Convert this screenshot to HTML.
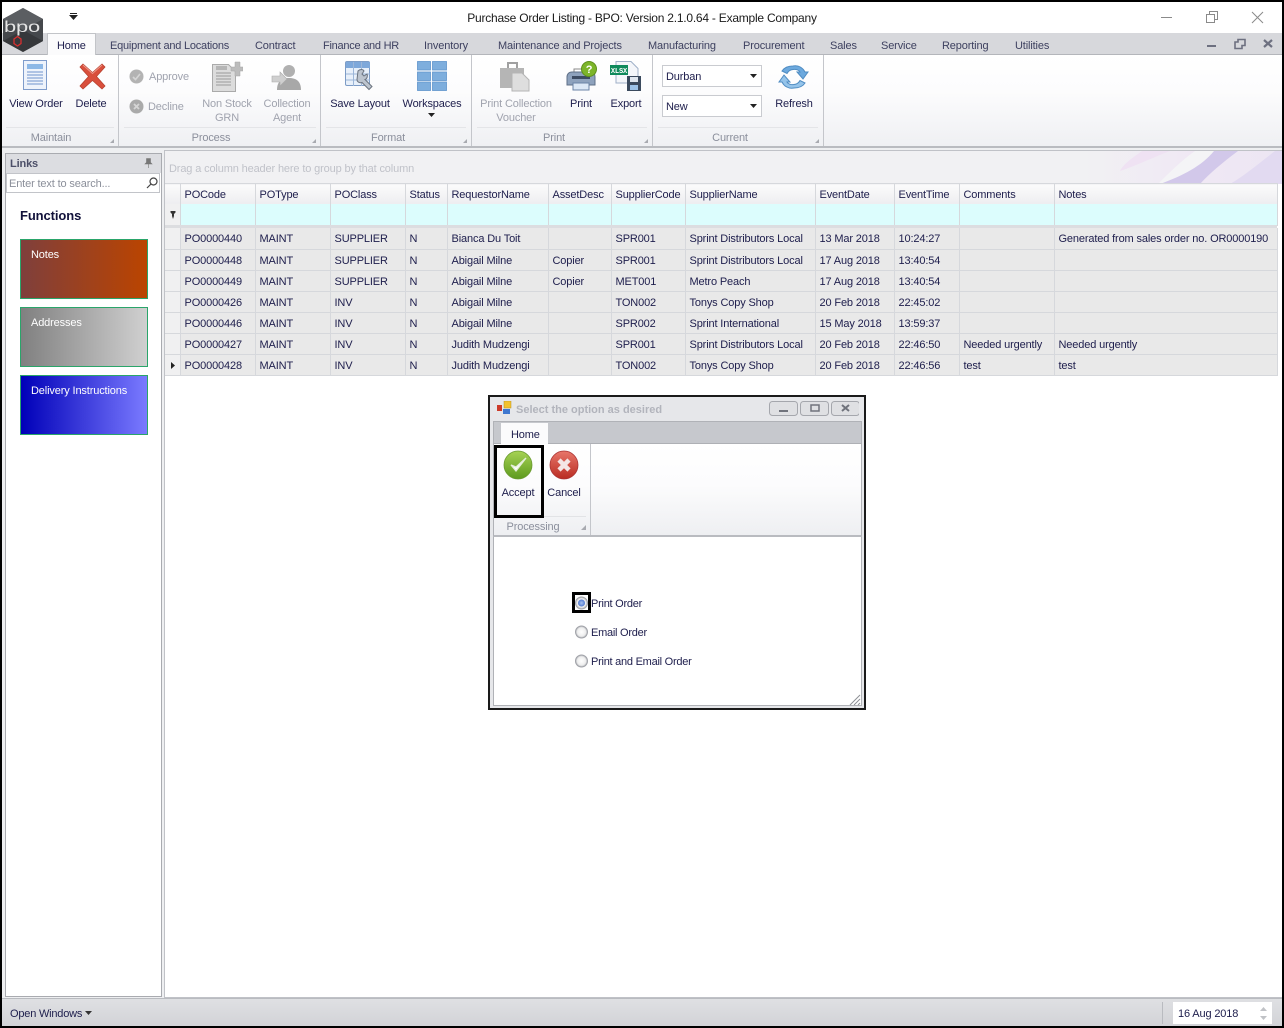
<!DOCTYPE html>
<html><head><meta charset="utf-8"><title>Purchase Order Listing</title>
<style>
*{box-sizing:border-box}
html,body{margin:0;padding:0}
body{width:1284px;height:1028px;position:relative;overflow:hidden;background:#fff;font-family:"Liberation Sans",sans-serif;font-size:11px;letter-spacing:-.14px;color:#20204e}
.a{position:absolute}
.t{position:absolute;white-space:nowrap;line-height:14px;font-size:11px;margin-top:1px}
.c{text-align:center;transform:translateX(-50%)}
.g{color:#a0a3ae}
.h{color:#8b8f9c}
.tab{color:#3e4160}
table{border-collapse:collapse;table-layout:fixed;position:absolute;left:165px;font-size:11px}
td{height:21px;padding:2px 0 0 4px;border-right:1px solid #d6d8dc;border-bottom:1px solid #d6d8dc;white-space:nowrap;overflow:visible;color:#20204e;line-height:14px}
#rows td{background:#e9e9e9}
#rows td:first-child{background:#f0f0f1}
#head td{background:linear-gradient(#fbfbfb,#ededf0)}
#filt td{background:#dcfdfd}
.sep{background:#c4c6cb}
.fn{position:absolute;left:20px;width:128px;height:60px;border:1px solid #2aa56a;color:#fff;padding:8px 0 0 10px;line-height:14px}
</style></head><body>

<!-- top title -->
<div class="t" style="left:0;width:1284px;top:10px;text-align:center;font-size:12px;letter-spacing:-.23px;color:#1a1a1a">Purchase Order Listing - BPO: Version 2.1.0.64 - Example Company</div>
<svg class="a" style="left:69px;top:13px" width="9" height="8"><rect x="1" y="0" width="7" height="1" fill="#222"/><path d="M0 2h9L4.500 7z" fill="#222"/></svg>
<svg class="a" style="left:1150px;top:6px" width="125" height="22" fill="none" stroke="#8a8a8a"><path d="M11 11.500h11"/><path d="M56.500 8.500h8v8h-8zM59.500 8.500v-3h8v8h-3"/><path d="M102 6l11 11M113 6l-11 11"/></svg>

<!-- tabs bar -->
<div class="a" style="left:2px;top:33px;width:1280px;height:22px;background:#d7d8dc;border-bottom:1px solid #b4b6bb"></div>
<div class="a" style="left:47px;top:33px;width:49px;height:22px;background:#fbfbfc;border:1px solid #c2c4c8;border-bottom:none"></div>
<div class="t" style="left:57px;top:38px;color:#20204e">Home</div>
<div class="t tab" style="left:110px;top:38px;letter-spacing:-.22px">Equipment and Locations</div>
<div class="t tab" style="left:255px;top:38px">Contract</div>
<div class="t tab" style="left:323px;top:38px;letter-spacing:-.25px">Finance and HR</div>
<div class="t tab" style="left:424px;top:38px">Inventory</div>
<div class="t tab" style="left:498px;top:38px">Maintenance and Projects</div>
<div class="t tab" style="left:648px;top:38px">Manufacturing</div>
<div class="t tab" style="left:743px;top:38px">Procurement</div>
<div class="t tab" style="left:830px;top:38px">Sales</div>
<div class="t tab" style="left:881px;top:38px">Service</div>
<div class="t tab" style="left:942px;top:38px">Reporting</div>
<div class="t tab" style="left:1015px;top:38px">Utilities</div>
<svg class="a" style="left:1204px;top:38px" width="72" height="12"><rect x="3" y="7" width="9" height="2" fill="#6d7080"/><path d="M31 4h3V1.500h7v6h-3v3h-7z" fill="none" stroke="#6d7080" stroke-width="1.600"/><path d="M60 2l8 7M68 2l-8 7" stroke="#6d7080" stroke-width="2.200"/></svg>

<!-- logo -->
<svg class="a" style="left:2px;top:8px" width="42" height="46"><path d="M21 0L41 11V33L21 44L1 33V11Z" fill="#45484c"/><path d="M21 0L41 11L21 22L1 11Z" fill="#5b5e62"/><path d="M1 33L21 22L41 33L21 44Z" fill="#36383b"/><text x="2" y="24" font-family="Liberation Sans" font-size="16" fill="#e4e4e4" textLength="36" lengthAdjust="spacingAndGlyphs">bpo</text><path d="M12 31l3.500-2.500 3.500 2.500v4.500l-3.500 2.500-3.500-2.500z" fill="none" stroke="#d83030" stroke-width="1.300"/></svg>

<!-- ribbon -->
<div class="a" style="left:2px;top:55px;width:1280px;height:93px;background:linear-gradient(#fff 0%,#fcfcfd 40%,#eff0f3 100%);border-bottom:2px solid #b9bbc0"></div>
<div class="a sep" style="left:118px;top:55px;width:1px;height:91px"></div>
<div class="a sep" style="left:320px;top:55px;width:1px;height:91px"></div>
<div class="a sep" style="left:471px;top:55px;width:1px;height:91px"></div>
<div class="a sep" style="left:652px;top:55px;width:1px;height:91px"></div>
<div class="a sep" style="left:823px;top:55px;width:1px;height:91px"></div>
<div class="a" style="left:6px;top:127px;width:108px;height:1px;background:#e4e5e8"></div>
<div class="a" style="left:124px;top:127px;width:192px;height:1px;background:#e4e5e8"></div>
<div class="a" style="left:326px;top:127px;width:140px;height:1px;background:#e4e5e8"></div>
<div class="a" style="left:477px;top:127px;width:170px;height:1px;background:#e4e5e8"></div>
<div class="a" style="left:658px;top:127px;width:160px;height:1px;background:#e4e5e8"></div>

<!-- view order icon -->
<svg class="a" style="left:23px;top:60px" width="26" height="31"><rect x=".5" y=".5" width="23" height="29" fill="#eef3fb" stroke="#7f9ccb"/><rect x="4" y="4" width="16" height="5" fill="#8db8e6"/><g stroke="#6f93cc"><path d="M4 12h16M4 15h16M4 18h16M4 21h16M4 24h16"/></g></svg>
<div class="t c" style="left:36px;top:96px">View Order</div>
<!-- delete -->
<svg class="a" style="left:79px;top:63px" width="27" height="27"><path d="M4 1L13.500 9.500 23 1l3 3-8.500 9.500L26 23l-3 3-9.500-8.500L4 26l-3-3 8.500-9.500L1 4z" fill="#d94f3c" stroke="#b8412f" stroke-width=".8"/><path d="M4 2L13.500 10.500 23 2" fill="none" stroke="#ee9a8c"/></svg>
<div class="t c" style="left:91px;top:96px">Delete</div>
<div class="t c h" style="left:51px;top:130px">Maintain</div>

<!-- process -->
<svg class="a" style="left:129px;top:69px" width="15" height="15"><circle cx="7.500" cy="7.500" r="7" fill="#b3b3b3"/><path d="M4 8l2.500 2.500L11 5" stroke="#d5d5d5" stroke-width="1.600" fill="none"/></svg>
<div class="t g" style="left:149px;top:69px">Approve</div>
<svg class="a" style="left:129px;top:99px" width="15" height="15"><circle cx="7.500" cy="7.500" r="7" fill="#aaa"/><path d="M5 5l5 5M10 5l-5 5" stroke="#d5d5d5" stroke-width="1.800"/></svg>
<div class="t g" style="left:148px;top:99px">Decline</div>
<svg class="a" style="left:212px;top:61px" width="31" height="31"><path d="M.5 3.500h16l7 7v20H.5z" fill="#dcdcdc" stroke="#aaa"/><g stroke="#9a9a9a"><path d="M4 12h15M4 15h15M4 18h15M4 21h15M4 24h15"/></g><rect x="4" y="5" width="11" height="4" fill="#b5b5b5"/><path d="M19 6h4V1h5v5h3v4h-3v5h-5v-5h-4z" fill="#bcbcbc" stroke="#a5a5a5" stroke-width=".5"/></svg>
<div class="t c g" style="left:227px;top:96px;text-align:center">Non Stock<br>GRN</div>
<svg class="a" style="left:271px;top:64px" width="31" height="26"><circle cx="18" cy="7" r="6" fill="#b0b0b0"/><path d="M6 26c0-9 5-12 12-12s12 3 12 12z" fill="#a8a8a8"/><path d="M1 12h8V8l7 7-7 7v-4H1z" fill="#cfcfcf" stroke="#aaa" stroke-width=".6"/></svg>
<div class="t c g" style="left:287px;top:96px;text-align:center">Collection<br>Agent</div>
<div class="t c h" style="left:211px;top:130px">Process</div>

<!-- format -->
<svg class="a" style="left:345px;top:61px" width="30" height="31"><rect x=".5" y=".5" width="24" height="24" rx="1.500" fill="#e8f0fa" stroke="#7d9cc6"/><rect x="1" y="1" width="24" height="6" fill="#7ea8da"/><g stroke="#9cb6d8"><path d="M1 13h24M1 19h24M8.500 1v24M16.500 1v24"/></g><path d="M13 10c2-2 5-2 6 0l-2 3 2 2 3-2c1 2 0 5-2 5.500l7 7-3 3-7-7c-3 1-5-1-5-3z" fill="#bcc4ce" stroke="#6c7480" stroke-width="1"/></svg>
<div class="t c" style="left:360px;top:96px">Save Layout</div>
<svg class="a" style="left:417px;top:61px" width="30" height="30"><g fill="#7eaedd" stroke="#5f94cc" stroke-width=".8"><rect x=".5" y=".5" width="13" height="8.500"/><rect x="15.500" y=".5" width="14" height="8.500"/><rect x=".5" y="11" width="13" height="8.500"/><rect x="15.500" y="11" width="14" height="8.500"/><rect x=".5" y="21" width="13" height="8.500"/><rect x="15.500" y="21" width="14" height="8.500"/></g></svg>
<div class="t c" style="left:432px;top:96px">Workspaces</div>
<svg class="a" style="left:428px;top:113px" width="7" height="5"><path d="M0 0h7L3.500 4z" fill="#222"/></svg>
<div class="t c h" style="left:388px;top:130px">Format</div>

<!-- print -->
<svg class="a" style="left:499px;top:60px" width="32" height="32"><path d="M1 8h24v20H1z" fill="#b5b5b5"/><path d="M9 8V3h9v5" fill="none" stroke="#a0a0a0" stroke-width="2"/><path d="M13 13h10l7 7v11H13z" fill="#dedede" stroke="#b5b5b5"/></svg>
<div class="t c g" style="left:516px;top:96px;text-align:center">Print Collection<br>Voucher</div>
<svg class="a" style="left:565px;top:61px" width="32" height="30"><path d="M9 8h15v8H9z" fill="#fff" stroke="#888"/><path d="M2 16c0-3 2-5 5-5h19c3 0 4 2 4 5v8H2z" fill="#8ea2bd" stroke="#5f7088"/><rect x="7" y="15" width="18" height="3" fill="#3d4c63"/><rect x="8" y="22" width="16" height="7" fill="#dce8f6" stroke="#6b84a6"/><circle cx="24" cy="8" r="7.500" fill="#7db52a" stroke="#5e8f1c"/><text x="24" y="12" text-anchor="middle" font-family="Liberation Sans" font-weight="bold" font-size="11" fill="#fff">?</text></svg>
<div class="t c" style="left:581px;top:96px">Print</div>
<svg class="a" style="left:610px;top:61px" width="32" height="30"><path d="M6 .5h15l7 7V22H6z" fill="#f4f6fa" stroke="#9fb0c8"/><rect x="0" y="4" width="18" height="10" fill="#0f8a5c"/><text x="9" y="12" text-anchor="middle" font-family="Liberation Mono" font-weight="bold" font-size="7" fill="#fff">XLSX</text><rect x="17" y="15" width="14" height="15" fill="#3b4a5e"/><rect x="20" y="16" width="8" height="5" fill="#dfe6ef"/><rect x="20" y="24" width="8" height="5" fill="#9cc2e8"/></svg>
<div class="t c" style="left:626px;top:96px">Export</div>
<div class="t c h" style="left:554px;top:130px">Print</div>

<!-- current -->
<div class="a" style="left:662px;top:65px;width:100px;height:22px;background:#fff;border:1px solid #c9cbd0"></div>
<div class="t" style="left:666px;top:69px">Durban</div>
<svg class="a" style="left:750px;top:74px" width="7" height="5"><path d="M0 0h7L3.500 4z" fill="#222"/></svg>
<div class="a" style="left:662px;top:95px;width:100px;height:22px;background:#fff;border:1px solid #c9cbd0"></div>
<div class="t" style="left:666px;top:99px">New</div>
<svg class="a" style="left:750px;top:104px" width="7" height="5"><path d="M0 0h7L3.500 4z" fill="#222"/></svg>
<svg class="a" style="left:777px;top:62px" width="33" height="30"><path d="M16 4c6-1 10 2 12 6h3l-5 7-6-7h3c-1-2-4-3-7-2.500-3 .3-5 2-6 4L5 9c2-3 6-5 11-5z" fill="#6ca9de" stroke="#4f8cc2"/><path d="M17 26c-6 1-10-2-12-6H2l5-7 6 7h-3c1 2 4 3 7 2.500 3-.3 5-2 6-4l5 2.500c-2 3-6 5-11 5z" fill="#95c4ea" stroke="#4f8cc2"/></svg>
<div class="t c" style="left:794px;top:96px">Refresh</div>
<div class="t c h" style="left:730px;top:130px">Current</div>

<!-- launcher corners -->
<svg class="a" style="left:0;top:131px" width="830" height="14" fill="#a8aab0"><path d="M114 8v4h-4zM316 8v4h-4zM467 8v4h-4zM648 8v4h-4zM819 8v4h-4z"/></svg>

<!-- main bg -->
<div class="a" style="left:2px;top:148px;width:1280px;height:850px;background:#eeeff1"></div>

<!-- links panel -->
<div class="a" style="left:5px;top:153px;width:157px;height:844px;background:#fff;border:1px solid #a9abb0"></div>
<div class="a" style="left:6px;top:154px;width:155px;height:19px;background:#dcdde1"></div>
<div class="t" style="left:10px;top:156px;font-weight:bold;color:#4c4f68">Links</div>
<svg class="a" style="left:144px;top:158px" width="9" height="10"><path d="M2.500 .5h4v4l1.500 1.500H1l1.500-1.500zM4.500 6v4" fill="#777" stroke="#777" stroke-width=".6"/></svg>
<div class="a" style="left:6px;top:173px;width:154px;height:20px;background:#fff;border:1px solid #c2c4c9"></div>
<div class="t" style="left:9px;top:176px;color:#8b8f9a">Enter text to search...</div>
<svg class="a" style="left:146px;top:177px" width="12" height="12" fill="none" stroke="#444" stroke-width="1.200"><circle cx="7.500" cy="4.500" r="3.500"/><path d="M5 7l-4 4"/></svg>
<div class="t" style="left:20px;top:208px;font-size:13px;font-weight:bold;letter-spacing:-.1px;color:#11113a">Functions</div>
<div class="fn" style="top:239px;background:linear-gradient(90deg,#7f3f3c,#bb4400)">Notes</div>
<div class="fn" style="top:307px;background:linear-gradient(90deg,#808080,#d0d0d0)">Addresses</div>
<div class="fn" style="top:375px;background:linear-gradient(90deg,#0000b8,#7a7aff)">Delivery Instructions</div>

<!-- grid panel -->
<div class="a" style="left:164px;top:150px;width:1118px;height:848px;background:#fff;border:1px solid #c0c2c7;border-right:none"></div>
<div class="a" style="left:165px;top:151px;width:1117px;height:33px;background:#f1f1f3;overflow:hidden">
<svg width="1117" height="33" style="position:absolute;left:0;top:0"><defs><linearGradient id="f" x1="0" x2="1" y1="0" y2="0"><stop offset="0" stop-color="#f1f1f3"/><stop offset=".55" stop-color="#f0e8f4"/><stop offset="1" stop-color="#ece6f3"/></linearGradient></defs><rect x="920" y="0" width="197" height="33" fill="url(#f)"/><path d="M1030 0h35c-18 10-32 22-44 33h-28c12-12 24-24 37-33z" fill="#f4f4f6"/><path d="M995 33c22-8 42-18 54-33h24c-16 12-28 22-38 33z" fill="#d2c8ea"/><path d="M1065 33c14-8 28-20 45-33h7v33z" fill="#e2daf1"/><path d="M955 20c18-6 34-14 50-20h-28c-8 6-18 12-22 20z" fill="#efe2f3"/></svg>
</div>
<div class="t" style="left:169px;top:161px;color:#c0c2c9">Drag a column header here to group by that column</div>

<table id="head" style="top:183px;width:1112px;border-top:1px solid #d6d8dc"><colgroup><col style="width:15px"><col style="width:75px"><col style="width:75px"><col style="width:75px"><col style="width:42px"><col style="width:101px"><col style="width:63px"><col style="width:74px"><col style="width:130px"><col style="width:79px"><col style="width:65px"><col style="width:95px"><col style="width:223px"></colgroup>
<tr><td></td><td>POCode</td><td>POType</td><td>POClass</td><td>Status</td><td>RequestorName</td><td>AssetDesc</td><td>SupplierCode</td><td>SupplierName</td><td>EventDate</td><td>EventTime</td><td>Comments</td><td>Notes</td></tr></table>
<table id="filt" style="top:204px;width:1112px"><colgroup><col style="width:15px"><col style="width:75px"><col style="width:75px"><col style="width:75px"><col style="width:42px"><col style="width:101px"><col style="width:63px"><col style="width:74px"><col style="width:130px"><col style="width:79px"><col style="width:65px"><col style="width:95px"><col style="width:223px"></colgroup>
<tr><td style="background:#f0f0f1"></td><td></td><td></td><td></td><td></td><td></td><td></td><td></td><td></td><td></td><td></td><td></td><td></td></tr></table>
<svg class="a" style="left:170px;top:211px" width="6" height="8"><path d="M.5 0h5v1.500L4 3v2L3 8 2 5V3L.5 1.500z" fill="#333"/></svg>
<div class="a" style="left:165px;top:225px;width:1112px;height:3px;background:#dcdde0"></div>

<table id="rows" style="top:228px;width:1112px"><colgroup><col style="width:15px"><col style="width:75px"><col style="width:75px"><col style="width:75px"><col style="width:42px"><col style="width:101px"><col style="width:63px"><col style="width:74px"><col style="width:130px"><col style="width:79px"><col style="width:65px"><col style="width:95px"><col style="width:223px"></colgroup>
<tr><td></td><td>PO0000440</td><td>MAINT</td><td>SUPPLIER</td><td>N</td><td>Bianca Du Toit</td><td></td><td>SPR001</td><td>Sprint Distributors Local</td><td>13 Mar 2018</td><td>10:24:27</td><td></td><td>Generated from sales order no. OR0000190</td></tr>
<tr><td></td><td>PO0000448</td><td>MAINT</td><td>SUPPLIER</td><td>N</td><td>Abigail Milne</td><td>Copier</td><td>SPR001</td><td>Sprint Distributors Local</td><td>17 Aug 2018</td><td>13:40:54</td><td></td><td></td></tr>
<tr><td></td><td>PO0000449</td><td>MAINT</td><td>SUPPLIER</td><td>N</td><td>Abigail Milne</td><td>Copier</td><td>MET001</td><td>Metro Peach</td><td>17 Aug 2018</td><td>13:40:54</td><td></td><td></td></tr>
<tr><td></td><td>PO0000426</td><td>MAINT</td><td>INV</td><td>N</td><td>Abigail Milne</td><td></td><td>TON002</td><td>Tonys Copy Shop</td><td>20 Feb 2018</td><td>22:45:02</td><td></td><td></td></tr>
<tr><td></td><td>PO0000446</td><td>MAINT</td><td>INV</td><td>N</td><td>Abigail Milne</td><td></td><td>SPR002</td><td>Sprint International</td><td>15 May 2018</td><td>13:59:37</td><td></td><td></td></tr>
<tr><td></td><td>PO0000427</td><td>MAINT</td><td>INV</td><td>N</td><td>Judith Mudzengi</td><td></td><td>SPR001</td><td>Sprint Distributors Local</td><td>20 Feb 2018</td><td>22:46:50</td><td>Needed urgently</td><td>Needed urgently</td></tr>
<tr><td></td><td>PO0000428</td><td>MAINT</td><td>INV</td><td>N</td><td>Judith Mudzengi</td><td></td><td>TON002</td><td>Tonys Copy Shop</td><td>20 Feb 2018</td><td>22:46:56</td><td>test</td><td>test</td></tr>
</table>
<svg class="a" style="left:171px;top:362px" width="5" height="7"><path d="M0 0l4 3.500L0 7z" fill="#222"/></svg>

<!-- dialog -->
<div class="a" style="left:488px;top:395px;width:378px;height:315px;background:#e6e7ea;border:2px solid #1a1a1a"></div>
<svg class="a" style="left:497px;top:401px" width="15" height="14"><rect x="7" y="0" width="7" height="7" fill="#f2c230" stroke="#b89020" stroke-width=".5"/><rect x="0" y="4" width="5" height="6" fill="#cc3a2a"/><rect x="6" y="8" width="7" height="5" fill="#3f78d0"/></svg>
<div class="t" style="left:516px;top:402px;font-weight:bold;letter-spacing:0;color:#b2b4bc">Select the option as desired</div>
<svg class="a" style="left:769px;top:401px" width="90" height="15"><g fill="#dfe0e3" stroke="#a5a7ad"><rect x=".5" y=".5" width="28" height="14" rx="3"/><rect x="31.500" y=".5" width="28" height="14" rx="3"/><rect x="62.500" y=".5" width="28" height="14" rx="3"/></g><rect x="10" y="9" width="9" height="2" fill="#70737c"/><rect x="42" y="4" width="8" height="6" fill="none" stroke="#70737c" stroke-width="1.500"/><path d="M73 4l7 6M80 4l-7 6" stroke="#70737c" stroke-width="2"/></svg>
<div class="a" style="left:493px;top:421px;width:369px;height:23px;background:#c6c8cd;border:1px solid #b0b2b7;border-bottom:1px solid #aeb0b5"></div>
<div class="a" style="left:501px;top:423px;width:47px;height:21px;background:#fbfbfc"></div>
<div class="t" style="left:511px;top:427px">Home</div>
<div class="a" style="left:493px;top:444px;width:369px;height:93px;background:linear-gradient(#fff 0%,#fcfcfd 45%,#eeeff2 100%);border-left:1px solid #b0b2b7;border-right:1px solid #b0b2b7;border-bottom:2px solid #b9bbc0"></div>
<div class="a sep" style="left:590px;top:444px;width:1px;height:91px"></div>
<div class="a" style="left:496px;top:516px;width:90px;height:1px;background:#e2e3e6"></div>
<svg class="a" style="left:503px;top:450px" width="30" height="30"><defs><linearGradient id="gr" x1="0" y1="0" x2="0" y2="1"><stop offset="0" stop-color="#a6d254"/><stop offset="1" stop-color="#5d9a1e"/></linearGradient><linearGradient id="rd" x1="0" y1="0" x2="0" y2="1"><stop offset="0" stop-color="#e8766a"/><stop offset="1" stop-color="#b92c22"/></linearGradient></defs><circle cx="15" cy="15" r="14" fill="url(#gr)" stroke="#6a9a30" stroke-width=".8"/><path d="M8 15l5 6L23 8l-10 9z" fill="#fff" stroke="#e4eed8" stroke-width="1.300"/></svg>
<svg class="a" style="left:549px;top:450px" width="30" height="30"><circle cx="15" cy="15" r="14" fill="url(#rd)" stroke="#a33" stroke-width=".8"/><path d="M10 10l10 10M20 10L10 20" stroke="#f4e6e6" stroke-width="4.500"/></svg>
<div class="t c" style="left:518px;top:485px">Accept</div>
<div class="t c" style="left:564px;top:485px">Cancel</div>
<div class="t c h" style="left:533px;top:519px">Processing</div>
<svg class="a" style="left:580px;top:524px" width="7" height="7"><path d="M6 1v5H1z" fill="#a8aab0"/></svg>
<div class="a" style="left:494px;top:445px;width:50px;height:73px;border:3px solid #000"></div>
<div class="a" style="left:493px;top:537px;width:369px;height:169px;background:#fff;border:1px solid #b0b2b7;border-top:none"></div>
<div class="a" style="left:572px;top:592px;width:19px;height:21px;border:3px solid #000"></div>
<svg class="a" style="left:574px;top:595px" width="16" height="75"><defs><radialGradient id="rb"><stop offset="0" stop-color="#fff"/><stop offset=".7" stop-color="#eee"/><stop offset="1" stop-color="#aeb0b6"/></radialGradient><radialGradient id="rs"><stop offset="0" stop-color="#a9c2f0"/><stop offset="1" stop-color="#4f78d0"/></radialGradient></defs><circle cx="7.500" cy="8" r="6" fill="url(#rb)" stroke="#a0a2a8"/><circle cx="7.500" cy="8" r="3.500" fill="url(#rs)"/><circle cx="7.500" cy="37" r="6" fill="url(#rb)" stroke="#a0a2a8"/><circle cx="7.500" cy="66" r="6" fill="url(#rb)" stroke="#a0a2a8"/></svg>
<div class="t" style="left:591px;top:596px;letter-spacing:-.25px">Print Order</div>
<div class="t" style="left:591px;top:625px;letter-spacing:-.25px">Email Order</div>
<div class="t" style="left:591px;top:654px;letter-spacing:-.25px">Print and Email Order</div>
<svg class="a" style="left:849px;top:694px" width="12" height="12" stroke="#8e9096"><path d="M1 11L11 1M5 11l6-6M9 11l2-2"/></svg>

<!-- status bar -->
<div class="a" style="left:2px;top:998px;width:1280px;height:28px;background:linear-gradient(#dfe0e3,#d2d3d7);border-top:1px solid #b9bbc0"></div>
<div class="t" style="left:10px;top:1006px;letter-spacing:-.2px">Open Windows</div>
<svg class="a" style="left:85px;top:1011px" width="7" height="5"><path d="M0 0h7L3.500 4z" fill="#333"/></svg>
<div class="a" style="left:1162px;top:1002px;width:1px;height:22px;background:#b9bbc0"></div>
<div class="a" style="left:1173px;top:1002px;width:99px;height:22px;background:#fff"></div>
<div class="t" style="left:1178px;top:1006px">16 Aug 2018</div>
<svg class="a" style="left:1260px;top:1007px" width="8" height="13" fill="#c0c2c6"><path d="M0 4h7L3.500 0zM0 9h7l-3.500 4z"/></svg>

<!-- black frame -->
<div class="a" style="left:0;top:0;width:1284px;height:1028px;border:2px solid #000;pointer-events:none"></div>
</body></html>
